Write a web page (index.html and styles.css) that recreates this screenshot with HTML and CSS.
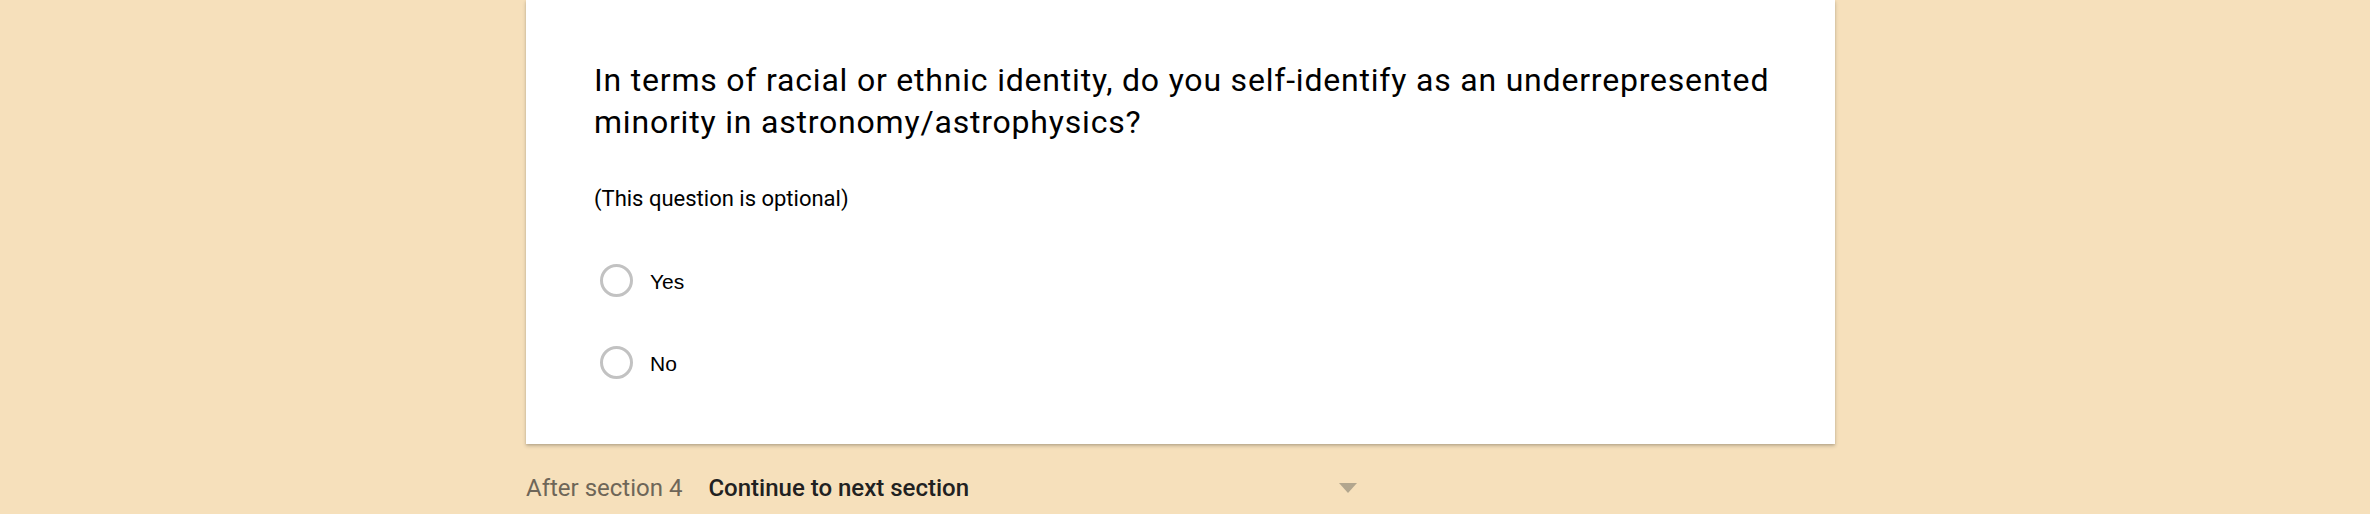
FILE: index.html
```html
<!DOCTYPE html>
<html lang="en">
<head>
<meta charset="utf-8">
<title>Section 4</title>
<link rel="stylesheet" href="styles.css">
</head>
<body>
<main class="page">
  <section class="card">
    <h2 class="title">In terms of racial or ethnic identity, do you self-identify as an underrepresented minority in astronomy/astrophysics?</h2>
    <p class="optional">(This question is optional)</p>
    <div class="options">
      <label class="option"><span class="radio"></span><span class="label">Yes</span></label>
      <label class="option"><span class="radio"></span><span class="label">No</span></label>
    </div>
  </section>
  <div class="after">
    <span class="after-label">After section 4</span>
    <div class="dropdown">
      <span class="dropdown-value">Continue to next section</span>
      <span class="caret"></span>
    </div>
  </div>
</main>
</body>
</html>
```

FILE: styles.css
```css
html, body {
  margin: 0;
  padding: 0;
}

body {
  background: #f6e0bb;
  font-family: Roboto, "Liberation Sans", Arial, sans-serif;
  height: 514px;
  overflow: hidden;
}

.page {
  padding-left: 526px;
}

.card {
  width: 1309px;
  box-sizing: border-box;
  background: #ffffff;
  padding: 59px 0 65px 68px;
  box-shadow: 0 2px 4px rgba(0, 0, 0, 0.2), 0 1px 2px rgba(0, 0, 0, 0.1);
}

.title {
  margin: 0;
  width: 1210px;
  font-size: 32px;
  letter-spacing: 0.8px;
  line-height: 42px;
  font-weight: 400;
  color: #000000;
}

.optional {
  margin: 41px 0 0;
  font-size: 22px;
  line-height: 30px;
  color: #000000;
}

.options {
  margin-top: 50px;
  display: flex;
  flex-direction: column;
  gap: 49px;
}

.option {
  display: flex;
  align-items: center;
  gap: 17px;
  height: 33px;
  padding-left: 6px;
}

.radio {
  width: 33px;
  height: 33px;
  box-sizing: border-box;
  border: 3px solid #c2c2c2;
  border-radius: 50%;
  flex: none;
}

.label {
  font-family: "Liberation Sans", Arial, sans-serif;
  font-size: 21px;
  line-height: 24px;
  color: #000000;
  padding-top: 3px;
}

.after {
  margin-top: 28px;
  display: flex;
  align-items: center;
  gap: 26px;
  font-size: 24px;
  line-height: 32px;
}

.after-label {
  color: #6e6658;
}

.dropdown {
  width: 657px;
  display: flex;
  align-items: center;
  justify-content: space-between;
}

.dropdown-value {
  color: #212121;
  font-weight: 500;
}

.caret {
  width: 0;
  height: 0;
  border-left: 9px solid transparent;
  border-right: 9px solid transparent;
  border-top: 10px solid #b2a68e;
  margin-right: 8px;
}
```
